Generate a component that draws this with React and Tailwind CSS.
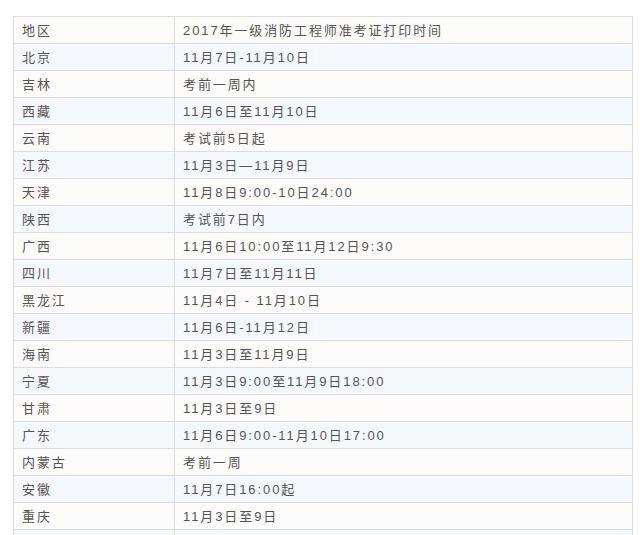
const rows = [
  ["北京", "11月7日-11月10日"],
  ["吉林", "考前一周内"],
  ["西藏", "11月6日至11月10日"],
  ["云南", "考试前5日起"],
  ["江苏", "11月3日—11月9日"],
  ["天津", "11月8日9:00-10日24:00"],
  ["陕西", "考试前7日内"],
  ["广西", "11月6日10:00至11月12日9:30"],
  ["四川", "11月7日至11月11日"],
  ["黑龙江", "11月4日 - 11月10日"],
  ["新疆", "11月6日-11月12日"],
  ["海南", "11月3日至11月9日"],
  ["宁夏", "11月3日9:00至11月9日18:00"],
  ["甘肃", "11月3日至9日"],
  ["广东", "11月6日9:00-11月10日17:00"],
  ["内蒙古", "考前一周"],
  ["安徽", "11月7日16:00起"],
  ["重庆", "11月3日至9日"],
  ["", ""],
];

function Row({ area, time, striped }) {
  return (
    <div
      className={`flex h-[27px] border-b border-[#dddddd] pt-[1px] ${
        striped ? "bg-[#f5f9fd]" : "bg-[#fdfcfb]"
      }`}
    >
      <div className="flex w-[161px] shrink-0 items-center border-r border-[#dddddd] pl-[8px]">
        {area}
      </div>
      <div className="flex flex-1 items-center pl-[8px]">{time}</div>
    </div>
  );
}

export default function App() {
  return (
    <div className="h-[535px] overflow-hidden bg-white pl-[13px] pt-[16px] pr-[7px]">
      <div
        className="border-l border-r border-t border-[#dddddd] text-[13px] tracking-[1.9px] text-[#555555]"
        style={{ fontFamily: '"Liberation Sans", "Noto Sans CJK SC", sans-serif' }}
      >
        <Row area="地区" time="2017年一级消防工程师准考证打印时间" />
        {rows.map(([area, time], i) => (
          <Row key={i} area={area} time={time} striped={i % 2 === 0} />
        ))}
      </div>
    </div>
  );
}
